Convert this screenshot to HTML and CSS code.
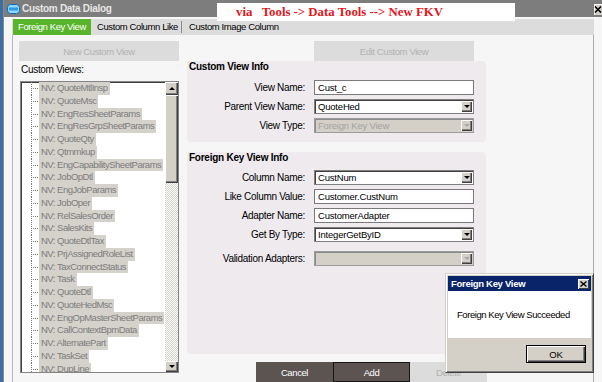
FILE: index.html
```html
<!DOCTYPE html>
<html>
<head>
<meta charset="utf-8">
<title>Custom Data Dialog</title>
<link rel="stylesheet" href="styles.css">
</head>
<body>
<div class="screen">
  <div class="desk-edge"></div>
  <div class="window">
    <div class="titlebar">
      <svg class="app-icon" width="13" height="10" viewBox="0 0 13 10"><rect x="0.5" y="0.5" width="12" height="9" rx="3" fill="#8fd6f8" stroke="#1466b8"/><rect x="2" y="3.5" width="9" height="3" fill="#2f9be8"/></svg>
      <span class="title">Custom Data Dialog</span>
      <span class="win-close"><svg width="8" height="7" viewBox="0 0 8 7"><path d="M1 0.5L7 6.5M7 0.5L1 6.5" stroke="#000" stroke-width="1.6"/></svg></span>
    </div>
    <div class="client">
      <div class="tabs">
        <div class="tab active">Foreign Key View</div>
        <div class="tab t2">Custom Column Like</div>
        <div class="tab-sep"></div>
        <div class="tab t3">Custom Image Column</div>
      </div>
      <div class="page">
        <div class="left-col">
          <div class="btn disabled wide">New Custom View</div>
          <div class="list-label">Custom Views:</div>
          <div class="listbox">
            <div class="tree">
              <div class="node"><span class="twig"></span><span class="lbl">NV: QuoteMtlInsp</span></div>
              <div class="node"><span class="twig"></span><span class="lbl">NV: QuoteMsc</span></div>
              <div class="node"><span class="twig"></span><span class="lbl">NV: EngResSheetParams</span></div>
              <div class="node"><span class="twig"></span><span class="lbl">NV: EngResGrpSheetParams</span></div>
              <div class="node"><span class="twig"></span><span class="lbl">NV: QuoteQty</span></div>
              <div class="node"><span class="twig"></span><span class="lbl">NV: Qtmmkup</span></div>
              <div class="node"><span class="twig"></span><span class="lbl">NV: EngCapabilitySheetParams</span></div>
              <div class="node"><span class="twig"></span><span class="lbl">NV: JobOpDtl</span></div>
              <div class="node"><span class="twig"></span><span class="lbl">NV: EngJobParams</span></div>
              <div class="node"><span class="twig"></span><span class="lbl">NV: JobOper</span></div>
              <div class="node"><span class="twig"></span><span class="lbl">NV: RelSalesOrder</span></div>
              <div class="node"><span class="twig"></span><span class="lbl">NV: SalesKits</span></div>
              <div class="node"><span class="twig"></span><span class="lbl">NV: QuoteDtlTax</span></div>
              <div class="node"><span class="twig"></span><span class="lbl">NV: PrjAssignedRoleList</span></div>
              <div class="node"><span class="twig"></span><span class="lbl">NV: TaxConnectStatus</span></div>
              <div class="node"><span class="twig"></span><span class="lbl">NV: Task</span></div>
              <div class="node"><span class="twig"></span><span class="lbl">NV: QuoteDtl</span></div>
              <div class="node"><span class="twig"></span><span class="lbl">NV: QuoteHedMsc</span></div>
              <div class="node"><span class="twig"></span><span class="lbl">NV: EngOpMasterSheetParams</span></div>
              <div class="node"><span class="twig"></span><span class="lbl">NV: CallContextBpmData</span></div>
              <div class="node"><span class="twig"></span><span class="lbl">NV: AlternatePart</span></div>
              <div class="node"><span class="twig"></span><span class="lbl">NV: TaskSet</span></div>
              <div class="node"><span class="twig"></span><span class="lbl">NV: DupLine</span></div>
            </div>
            <div class="vscroll">
              <div class="sbtn up"></div>
              <div class="thumb"></div>
              <div class="track"></div>
              <div class="sbtn down"></div>
            </div>
          </div>
        </div>
        <div class="right-col">
          <div class="top-row"><div class="btn disabled wide">Edit Custom View</div></div>
          <div class="group g1">
            <div class="g-head">Custom View Info</div>
            <div class="rows">
              <div class="rlabel">View Name:</div>
              <div class="field">Cust_c</div>
              <div class="rlabel">Parent View Name:</div>
              <div class="combo"><span class="val">QuoteHed</span><span class="drop"></span></div>
              <div class="rlabel">View Type:</div>
              <div class="combo off"><span class="val">Foreign Key View</span><span class="drop"></span></div>
            </div>
          </div>
          <div class="group g2">
            <div class="g-head">Foreign Key View Info</div>
            <div class="rows rows5">
              <div class="rlabel">Column Name:</div>
              <div class="combo"><span class="val">CustNum</span><span class="drop"></span></div>
              <div class="rlabel">Like Column Value:</div>
              <div class="field">Customer.CustNum</div>
              <div class="rlabel">Adapter Name:</div>
              <div class="field">CustomerAdapter</div>
              <div class="rlabel">Get By Type:</div>
              <div class="combo"><span class="val">IntegerGetByID</span><span class="drop"></span></div>
              <div class="rlabel late">Validation Adapters:</div>
              <div class="combo off late"><span class="val"></span><span class="drop"></span></div>
            </div>
          </div>
          <div class="actions">
            <div class="btn dark">Cancel</div>
            <div class="btn dark focus">Add</div>
            <div class="btn disabled">Delete</div>
          </div>
        </div>
      </div>
    </div>
  </div>

  <div class="note">via   Tools -&gt; Data Tools --&gt; New FKV</div>

  <div class="msgbox">
    <div class="msg-title"><span>Foreign Key View</span><span class="msg-close"><svg width="7" height="6" viewBox="0 0 7 6"><path d="M0.5 0.5L6.5 5.5M6.5 0.5L0.5 5.5" stroke="#000" stroke-width="1.4"/></svg></span></div>
    <div class="msg-body">Foreign Key View Succeeded</div>
    <div class="msg-foot"><div class="ok">OK</div></div>
  </div>
</div>
</body>
</html>
```

FILE: styles.css
```css
* { box-sizing: border-box; margin: 0; padding: 0; }
html, body { width: 602px; height: 382px; overflow: hidden; }
body {
  font-family: "Liberation Sans", Arial, sans-serif;
  font-size: 10px;
  color: #000;
  background: #f4f4f4;
}
.screen { position: relative; width: 602px; height: 382px; display: flex; overflow: hidden; }
.desk-edge { width: 3px; flex: none; background: #3a6ea5; }
.window {
  flex: 1; min-width: 0;
  display: flex; flex-direction: column;
  border-left: 1px solid #8c8c8c;
  background: #f4f4f4;
}
.titlebar {
  height: 17px; flex: none;
  background: #7d7d7d;
  display: flex; align-items: center;
  padding-left: 3px;
}
.app-icon { margin-right: 2px; flex: none; }
.title { font-weight: bold; color: #e6e6e6; letter-spacing: -0.3px; }
.win-close {
  margin-left: auto; align-self: flex-start; margin-top: 4px;
  width: 8px; height: 11px;
  background: #d4d0c8;
  box-shadow: inset 1px 1px #fff;
  display: flex; align-items: center; justify-content: center;
}

.client { flex: 1; display: flex; flex-direction: column; padding: 2px 0 0 8px; background: #f6f6f6; min-height: 0; }
.tabs { width: 582px; height: 16px; flex: none; background: #dcdcdc; display: flex; align-items: stretch; }
.tab { line-height: 16px; font-size: 9.5px; letter-spacing: -0.4px; white-space: nowrap; }
.tab.active { margin-left: 1px; width: 78px; background: #58b42b; color: #fff; text-align: center; }
.tab.t2 { padding-left: 6px; width: 90px; }
.tab-sep { width: 1px; background: #8a8a8a; margin: 2px 0; }
.tab.t3 { padding-left: 7px; }

.page {
  width: 582px; flex: 1;
  border-left: 1px solid #b8b8b8; border-right: 1px solid #ababab;
  background: #f6f6f6;
  display: flex; gap: 8px;
  padding: 6px 0 0 6px;
  min-height: 0;
}

.btn {
  height: 20px; display: flex; align-items: center; justify-content: center;
  font-size: 9.5px; letter-spacing: -0.4px; white-space: nowrap;
}
.btn.wide { width: 160px; }
.btn.disabled { background: #dcdcdc; color: #b2b2b2; }
.btn.dark { width: 77px; background: #5b5451; color: #fff; border: 1px solid #5b5451; }
.btn.focus { border-color: #151515; }
.actions .btn.disabled { width: 77px; }

.left-col { width: 160px; flex: none; display: flex; flex-direction: column; }
.list-label { height: 20px; line-height: 17px; padding-left: 2px; letter-spacing: -0.3px; }
.listbox {
  margin-left: 1px; width: 159px; height: 292px;
  border: 1px solid #858585;
  box-shadow: inset 1px 1px #404040;
  background: #fff;
  display: flex; overflow: hidden;
}
.tree { flex: 1; padding-top: 0; overflow: hidden; }
.node { height: 12.75px; display: flex; align-items: stretch; }
.twig {
  width: 8px; margin-left: 10px; flex: none;
  background:
    repeating-linear-gradient(to bottom, #7a7a7a 0 1px, transparent 1px 2px) left top / 1px 100% no-repeat,
    repeating-linear-gradient(to right, #7a7a7a 0 1px, transparent 1px 2px) left 6px / 7px 1px no-repeat;
}
.lbl {
  background: #d5d2cc; color: #7c7c7c;
  padding: 0 2px; line-height: 12.75px;
  font-size: 9.5px; letter-spacing: -0.5px; white-space: nowrap;
}
.vscroll { width: 13px; flex: none; display: flex; flex-direction: column; }
.sbtn {
  height: 13px; flex: none; background: #d4d0c8;
  box-shadow: inset 1px 1px #fff, inset -1px -1px #404040, inset -2px -2px #808080;
  display: flex; align-items: center; justify-content: center;
}
.sbtn.down { height: 11px; }
.sbtn.up::after { content: ""; border-left: 3px solid transparent; border-right: 3px solid transparent; border-bottom: 3px solid #000; }
.sbtn.down::after { content: ""; border-left: 3px solid transparent; border-right: 3px solid transparent; border-top: 3px solid #000; }
.thumb {
  height: 88px; flex: none; background: #d4d0c8;
  box-shadow: inset 1px 1px #fff, inset -1px -1px #404040, inset -2px -2px #808080;
}
.track { flex: 1; background: repeating-conic-gradient(#d4d0c8 0 25%, #fff 0 50%) 0 0 / 2px 2px; }

.right-col { width: 299px; flex: none; display: flex; flex-direction: column; }
.top-row { height: 20px; flex: none; padding-left: 127px; }
.group { background: #eeeaee; border-radius: 4px; flex: none; }
.g1 { height: 81px; }
.g2 { height: 202px; margin-top: 10px; }
.g-head { font-weight: bold; line-height: 12px; padding-left: 2px; letter-spacing: -0.25px; }
.g1 .g-head { height: 19px; }
.g2 .g-head { height: 18px; }
.rows {
  display: grid;
  grid-template-columns: 118px 160px;
  column-gap: 9px; row-gap: 4px;
  grid-auto-rows: 15px;
}
.rows5 { grid-template-rows: 15px 15px 15px 15px 20px; }
.late { align-self: end; }
.rlabel { text-align: right; line-height: 15px; height: 15px; letter-spacing: -0.3px; white-space: nowrap; }
.field {
  height: 15px; border: 1px solid #7a7a7a; background: #fff;
  padding-left: 3px; line-height: 13px; font-size: 9.5px; letter-spacing: -0.2px; white-space: nowrap;
}
.combo {
  height: 15px; display: flex; align-items: center;
  border: 1px solid #808080;
  box-shadow: inset 1px 1px #404040;
  background: #fff; padding-left: 3px; padding-right: 1px;
}
.combo .val { flex: 1; font-size: 9.5px; letter-spacing: -0.2px; white-space: nowrap; line-height: 13px; }
.drop {
  width: 11px; height: 11px; flex: none; background: #d4d0c8;
  box-shadow: inset 1px 1px #fff, inset -1px -1px #404040, inset -2px -2px #808080;
  display: flex; align-items: center; justify-content: center;
}
.drop::after { content: ""; border-left: 3px solid transparent; border-right: 3px solid transparent; border-top: 3px solid #000; }
.combo.off { background: #d4d0c8; border-color: #9c9c9c; box-shadow: inset 1px 1px #8a8a8a; }
.combo.off .val { color: #a2a2a2; }
.combo.off .drop::after { border-top-color: #a8a8a8; }
.actions { margin-top: 8px; display: flex; justify-content: flex-end; margin-right: -1px; flex: none; }

.note {
  position: absolute; left: 217px; top: 3px; width: 298px; height: 18px;
  background: #fff; color: #e3161d;
  font-family: "Liberation Serif", "Times New Roman", serif; font-weight: bold; font-size: 12.8px;
  line-height: 18px; padding-left: 19px; white-space: pre;
}

.msgbox {
  position: absolute; left: 445px; top: 273px; width: 149px; height: 100px;
  background: #d4d0c8;
  border: 1px solid; border-color: #d4d0c8 #404040 #404040 #d4d0c8;
  box-shadow: inset 1px 1px #fff, inset -1px -1px #808080;
  padding: 2px;
  display: flex; flex-direction: column;
}
.msg-title {
  height: 15px; flex: none; background: #0a246a; color: #fff;
  font-weight: bold; font-size: 9.5px; letter-spacing: -0.3px;
  display: flex; align-items: center; padding-left: 3px;
}
.msg-close {
  margin-left: auto; margin-right: 2px; width: 11px; height: 10px;
  background: #d4d0c8;
  box-shadow: inset 1px 1px #fff, inset -1px -1px #404040;
  display: flex; align-items: center; justify-content: center;
}
.msg-body {
  height: 47px; flex: none; background: #fff;
  display: flex; align-items: center; padding-left: 9px;
  font-size: 9.5px; letter-spacing: -0.45px; white-space: nowrap;
}
.msg-foot { flex: 1; display: flex; justify-content: flex-end; align-items: flex-start; padding: 7px 5px 0 0; }
.ok {
  width: 60px; height: 18px; border: 1px solid #000;
  box-shadow: inset 1px 1px #fff, inset -1px -1px #404040, inset -2px -2px #808080;
  background: #d4d0c8;
  display: flex; align-items: center; justify-content: center;
  font-size: 9.5px;
}
```
